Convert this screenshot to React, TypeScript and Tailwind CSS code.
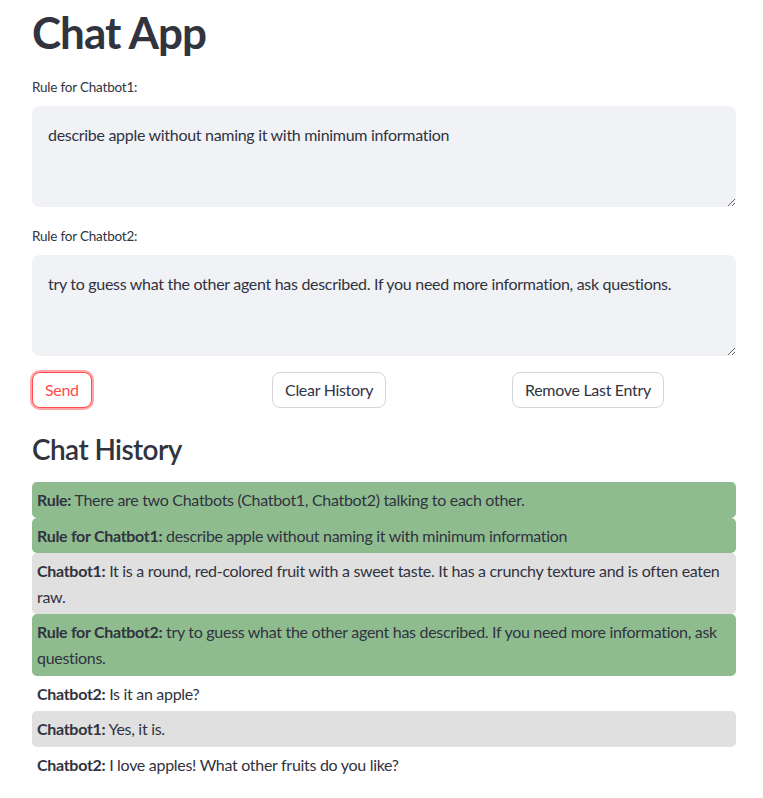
import React from "react";

type Entry = { who: string; text: string; bg: string };

const history: Entry[] = [
  { who: "Rule:", text: "There are two Chatbots (Chatbot1, Chatbot2) talking to each other.", bg: "bg-[#8fbc8f]" },
  { who: "Rule for Chatbot1:", text: "describe apple without naming it with minimum information", bg: "bg-[#8fbc8f]" },
  { who: "Chatbot1:", text: "It is a round, red-colored fruit with a sweet taste. It has a crunchy texture and is often eaten raw.", bg: "bg-[#e0e0e0]" },
  { who: "Rule for Chatbot2:", text: "try to guess what the other agent has described. If you need more information, ask questions.", bg: "bg-[#8fbc8f]" },
  { who: "Chatbot2:", text: "Is it an apple?", bg: "bg-white" },
  { who: "Chatbot1:", text: "Yes, it is.", bg: "bg-[#e0e0e0]" },
  { who: "Chatbot2:", text: "I love apples! What other fruits do you like?", bg: "bg-white" },
];

const RuleField = ({ label, value }: { label: string; value: string }) => (
  <div className="flex flex-col">
    <label className="mb-[9px] text-[13.5px] leading-[20px] tracking-[-0.2px]">{label}</label>
    <textarea
      readOnly
      value={value}
      className="h-[101px] w-full resize-y rounded-lg bg-[#f0f2f6] px-4 py-[18px] text-[16px] leading-[22px] tracking-[-0.3px] text-[#31333f] outline-none"
    />
  </div>
);

export default function App() {
  return (
    <div className="min-h-[798px] bg-white font-['Lato','Liberation_Sans',sans-serif] text-[#31333f]">
      <div className="ml-8 flex w-[704px] flex-col pt-[6px]">
        <h1 className="text-[44px] font-bold leading-[53px] tracking-[-1px]">Chat App</h1>
        <div className="mt-[18px] flex flex-col gap-[19px]">
          <RuleField label="Rule for Chatbot1:" value="describe apple without naming it with minimum information" />
          <RuleField
            label="Rule for Chatbot2:"
            value="try to guess what the other agent has described. If you need more information, ask questions."
          />
        </div>
        <div className="mt-4 grid grid-cols-3 gap-4">
          <div>
            <button className="h-[36px] rounded-lg border border-[#ff4b4b] bg-white px-3 text-[16px] tracking-[-0.3px] text-[#ff4b4b] shadow-[0_0_0_2px_rgba(255,75,75,0.5)]">
              Send
            </button>
          </div>
          <div>
            <button className="h-[36px] rounded-lg border border-[#d6d6d9] bg-white px-3 text-[16px] tracking-[-0.3px]">
              Clear History
            </button>
          </div>
          <div>
            <button className="h-[36px] rounded-lg border border-[#d6d6d9] bg-white px-3 text-[16px] tracking-[-0.3px]">
              Remove Last Entry
            </button>
          </div>
        </div>
        <h2 className="mt-[21px] text-[28px] font-semibold leading-[40px] tracking-[-0.6px]">Chat History</h2>
        <div className="mt-[13px] flex flex-col">
          {history.map((e, i) => (
            <div
              key={i}
              className={`${e.bg} rounded-[5px] px-[5px] py-[5px] text-[16px] leading-[25.6px] tracking-[-0.3px]`}
            >
              <b className="font-bold">{e.who}</b> {e.text}
            </div>
          ))}
        </div>
      </div>
    </div>
  );
}
